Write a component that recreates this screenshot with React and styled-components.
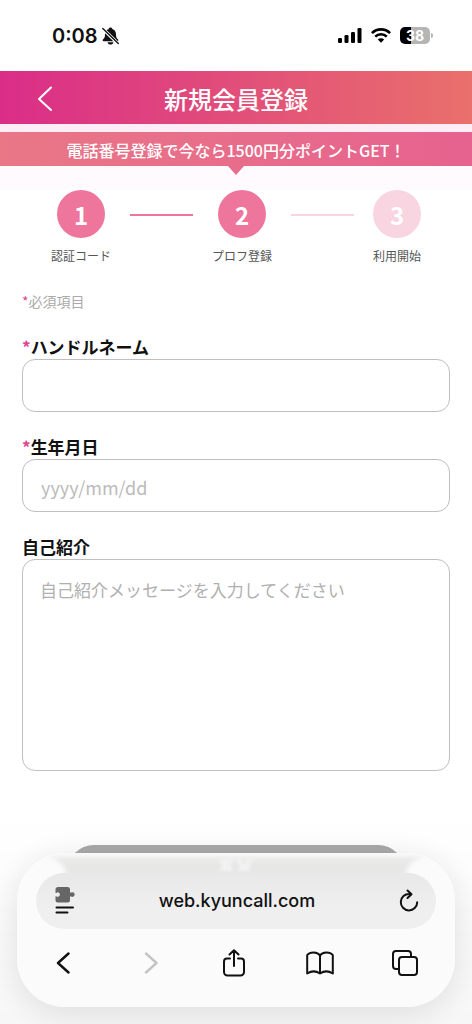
import React from "react"
import styled, { createGlobalStyle } from "styled-components"

const GlobalStyle = createGlobalStyle`
  * {
    box-sizing: border-box;
  }
  body {
    margin: 0;
    background: #fff;
    color: #111;
    font-family: "Noto Sans CJK JP", "Noto Sans", sans-serif;
  }
  button {
    padding: 0;
    border: 0;
    background: none;
    font: inherit;
    color: inherit;
  }
`

const Page = styled.div`
  display: flex;
  flex-direction: column;
  min-height: 100vh;
`

const StatusBar = styled.div`
  display: flex;
  align-items: center;
  justify-content: space-between;
  height: 71px;
  padding: 0 39px 0 52px;
`

const StatusGroup = styled.div`
  display: flex;
  align-items: center;
  gap: ${p => p.$gap}px;
`

const Clock = styled.span`
  font-family: Inter, sans-serif;
  font-size: 20px;
  font-weight: 600;
  line-height: 24px;
`

const Battery = styled.div`
  display: flex;
  align-items: center;
  gap: 1px;
`

const BatteryBody = styled.div`
  width: 30px;
  height: 17px;
  border-radius: 5px;
  background: linear-gradient(90deg, #000 38%, #b5b5b5 38%);
  color: #fff;
  font-family: Inter, sans-serif;
  font-size: 14px;
  font-weight: 700;
  line-height: 17px;
  text-align: center;
`

const BatteryTip = styled.div`
  width: 2px;
  height: 5px;
  border-radius: 0 2px 2px 0;
  background: #b5b5b5;
`

const Top = styled.div`
  display: flex;
  flex-direction: column;
  gap: 8px;
  padding-bottom: 24px;
  background: linear-gradient(#fdedf6 60px, #fffafd 96px);
`

const Header = styled.header`
  display: grid;
  grid-template-columns: 60px 1fr 60px;
  align-items: center;
  height: 53px;
  padding: 0 15px;
  background: linear-gradient(90deg, #da2d88, #e9706b);
  color: #fff;
`

const Title = styled.h1`
  margin: 0;
  padding-top: 2px;
  font-size: 24px;
  font-weight: 500;
  line-height: 36px;
  text-align: center;
`

const HeaderBack = styled.button`
  display: grid;
  place-items: center;
  height: 48px;
`

const Banner = styled.p`
  position: relative;
  margin: 0;
  padding-top: 2px;
  height: 34px;
  background: linear-gradient(90deg, #e97786, #e6628f);
  color: #fff;
  font-size: 16px;
  font-weight: 500;
  line-height: 32px;
  text-align: center;

  &::after {
    content: "";
    position: absolute;
    top: 100%;
    left: 50%;
    margin-left: -8px;
    border: 8px solid transparent;
    border-top: 9px solid #e86c8b;
    border-bottom: 0;
  }
`

const Steps = styled.ol`
  display: flex;
  justify-content: center;
  gap: 19px;
  margin: 0;
  padding: 0;
  list-style: none;
`

const Step = styled.li`
  display: flex;
  flex-direction: column;
  align-items: center;
  gap: 8px;
  color: #555;
  font-size: 12px;
  line-height: 20px;
`

const StepNumber = styled.span`
  width: 48px;
  height: 48px;
  border-radius: 50%;
  background: ${p => (p.$done ? "#ee769d" : "#f9d4e1")};
  color: #fff;
  font-size: 24px;
  font-weight: 700;
  line-height: 50px;
  text-align: center;
`

const StepLine = styled.li`
  width: 63px;
  height: 2px;
  margin-top: 24px;
  background: ${p => (p.$done ? "#ee769d" : "#f9d4e1")};
`

const Form = styled.form`
  display: flex;
  flex-direction: column;
  gap: 22px;
  padding: 24px 22px 0;
`

const Required = styled.span`
  color: #e0458f;
`

const Note = styled.p`
  margin: 0;
  color: #aaa;
  font-size: 14px;
  line-height: 22px;
`

const Field = styled.div`
  display: flex;
  flex-direction: column;
`

const Label = styled.label`
  font-size: 17px;
  font-weight: 700;
  line-height: 25px;
`

const Input = styled.input`
  width: 100%;
  height: 53px;
  padding: 2px 18px 0;
  border: 1px solid #bfbfbf;
  border-radius: 13px;
  background: #fff;
  font: inherit;
  font-size: 18px;

  &::placeholder {
    color: #bbb;
  }
`

const TextArea = styled.textarea`
  display: block;
  width: 100%;
  height: 212px;
  padding: 17px;
  border: 1px solid #bfbfbf;
  border-radius: 13px;
  background: #fff;
  font: inherit;
  font-size: 17px;
  line-height: 25px;
  resize: none;

  &::placeholder {
    color: #b0b0b0;
  }
`

const Submit = styled.button`
  align-self: center;
  width: 79%;
  height: 54px;
  margin-top: 52px;
  border-radius: 27px;
  background: #aaa;
`

const Dock = styled.div`
  position: fixed;
  right: 0;
  bottom: 0;
  left: 0;
  padding: 41px 17px 17px;
  background: linear-gradient(rgba(0, 0, 0, 0), rgba(0, 0, 0, 0.03));
`

const Glass = styled.div`
  position: relative;
  overflow: hidden;
  padding: 20px 19px 24px;
  border-radius: 48px;
  background: #fbfbfb;
`

const Shadow = styled.div`
  border-radius: 48px;
  box-shadow: 0 6px 36px rgba(0, 0, 0, 0.12);
`

const Reflection = styled.svg`
  position: absolute;
  top: 0;
  left: 0;
  width: 100%;
  height: 64px;
`

const AddressBar = styled.div`
  position: relative;
  display: grid;
  grid-template-columns: 20px 1fr 20px;
  align-items: center;
  height: 56px;
  padding: 0 17px 0 19px;
  border-radius: 28px;
  background: linear-gradient(#e8e8e8, #efefef 60%);
`

const Address = styled.span`
  font-family: Inter, sans-serif;
  font-size: 18px;
  font-weight: 500;
  line-height: 24px;
  text-align: center;
`

const IconButton = styled.button`
  display: grid;
  place-items: center;
  height: 40px;
`

const Toolbar = styled.nav`
  display: flex;
  justify-content: space-between;
  margin: 14px 11px 0 7px;

  ${IconButton} {
    width: 40px;
  }
`

const Line = ({ w, h, width = 2, color = "#111", children }) => (
  <svg
    width={w}
    height={h}
    viewBox={`0 0 ${w} ${h}`}
    fill="none"
    stroke={color}
    strokeWidth={width}
    strokeLinecap="round"
    strokeLinejoin="round"
    aria-hidden="true"
  >
    {children}
  </svg>
)

const BellOff = () => (
  <svg width="17" height="18" viewBox="0 0 17 18" aria-hidden="true">
    <path
      d="M8.500.4c-1 0-1.700.7-1.800 1.500C4.300 2.700 3 4.700 3 7.200c0 3-.6 4-1.900 5.100-.9.800-.5 1.900.6 1.900h13.600c1.100 0 1.500-1.100.6-1.900C14.600 11.200 14 10.200 14 7.200c0-2.500-1.300-4.500-3.700-5.300C10.200 1.100 9.500.4 8.500.4z"
      fill="#111"
    />
    <path d="M5.500 15.200h6c-.3 1.500-1.500 2.300-3 2.300s-2.700-.8-3-2.300z" fill="#111" />
    <path d="M.5 1.500l15.500 15" stroke="#fff" strokeWidth="3.200" />
    <path d="M.8 1.500l15.500 15" stroke="#111" strokeWidth="1.400" strokeLinecap="round" />
  </svg>
)

const Signal = () => (
  <svg width="24" height="15" viewBox="0 0 24 15" aria-hidden="true">
    <rect x="0" y="10" width="4" height="5" rx="1.200" />
    <rect x="6.500" y="7" width="4" height="8" rx="1.200" />
    <rect x="13" y="4" width="4" height="11" rx="1.200" />
    <rect x="19.500" y="0" width="4" height="15" rx="1.200" />
  </svg>
)

const Wifi = () => (
  <svg width="20" height="15" viewBox="0 0 20 15" aria-hidden="true">
    <g fill="none" stroke="#000" strokeWidth="2.600">
      <path d="M.9 5.100a13 13 0 0 1 18.200 0" />
      <path d="M4.200 8.600a8.300 8.300 0 0 1 11.600 0" />
    </g>
    <path d="M10 14.700l-3.200-3.200a4.600 4.600 0 0 1 6.400 0z" />
  </svg>
)

const ReaderIcon = () => (
  <svg width="20" height="28" viewBox="0 0 20 28" aria-hidden="true">
    <path
      d="M3 0h9.500A2.500 2.500 0 0 1 15 2.500v3.100h1.200a2.300 2.300 0 1 1 0 4H15v3.400a2.500 2.500 0 0 1-2.500 2.500H3A2.500 2.500 0 0 1 .5 13V9.300h.8a2.200 2.200 0 1 0 0-3.400H.5V2.500A2.500 2.500 0 0 1 3 0z"
      fill="#666"
    />
    <path d="M1.500 20.500h16.500M1.500 25.500h11" stroke="#111" strokeWidth="2" strokeLinecap="round" />
  </svg>
)

const GlassReflection = () => (
  <Reflection viewBox="0 0 438 64" preserveAspectRatio="none" aria-hidden="true">
    <defs>
      <linearGradient id="fade" gradientUnits="userSpaceOnUse" x1="0" y1="0" x2="0" y2="40">
        <stop offset="0" stopColor="#f0f0f0" />
        <stop offset=".3" stopColor="#e6e6e5" />
        <stop offset="1" stopColor="#e8e8e8" />
      </linearGradient>
      <filter id="soft" x="-10%" y="-20%" width="120%" height="140%">
        <feGaussianBlur stdDeviation="2" />
      </filter>
      <filter id="ghost" x="-20%" y="-40%" width="140%" height="180%">
        <feGaussianBlur stdDeviation="1.600" />
      </filter>
    </defs>
    <path d="M28 3h382c-12 2-20 9-22 19v16H50V22C48 12 40 5 28 3z" fill="url(#fade)" filter="url(#soft)" />
    <path
      d="M201 6h15v4h-3l3 8h-14l3-5zM218 6h6l3 5 4-5h7l-6 7 1 5h-12l2-5z"
      fill="#f2f2f2"
      filter="url(#ghost)"
    />
  </Reflection>
)

const steps = [
  { label: "認証コード", done: true },
  { label: "プロフ登録", done: true },
  { label: "利用開始", done: false },
]

export default function App() {
  return (
    <Page>
      <GlobalStyle />
      <StatusBar>
        <StatusGroup $gap={4}>
          <Clock>0:08</Clock>
          <BellOff />
        </StatusGroup>
        <StatusGroup $gap={9}>
          <Signal />
          <Wifi />
          <Battery>
            <BatteryBody>38</BatteryBody>
            <BatteryTip />
          </Battery>
        </StatusGroup>
      </StatusBar>

      <Top>
        <Header>
          <HeaderBack type="button" aria-label="戻る">
            <Line w={14} h={26} color="#fff">
              <path d="M13 2.500L1 14 13 25" />
            </Line>
          </HeaderBack>
          <Title>新規会員登録</Title>
        </Header>
        <Banner>電話番号登録で今なら1500円分ポイントGET！</Banner>
      </Top>

      <Steps>
        {steps.map((step, i) => (
          <React.Fragment key={step.label}>
            {i > 0 && <StepLine $done={step.done} aria-hidden="true" />}
            <Step>
              <StepNumber $done={step.done}>{i + 1}</StepNumber>
              {step.label}
            </Step>
          </React.Fragment>
        ))}
      </Steps>

      <Form>
        <Note>
          <Required>*</Required>必須項目
        </Note>
        <Field>
          <Label htmlFor="handle">
            <Required>*</Required>ハンドルネーム
          </Label>
          <Input id="handle" type="text" />
        </Field>
        <Field>
          <Label htmlFor="birthday">
            <Required>*</Required>生年月日
          </Label>
          <Input id="birthday" type="text" placeholder="yyyy/mm/dd" />
        </Field>
        <Field>
          <Label htmlFor="intro">自己紹介</Label>
          <TextArea id="intro" placeholder="自己紹介メッセージを入力してください" />
        </Field>
        <Submit type="button" aria-label="登録" />
      </Form>

      <Dock>
        <Shadow>
          <Glass>
            <GlassReflection />
            <AddressBar>
              <IconButton type="button" aria-label="ページメニュー">
                <ReaderIcon />
              </IconButton>
              <Address>web.kyuncall.com</Address>
              <IconButton type="button" aria-label="再読み込み">
                <Line w={20} h={24}>
                  <path d="M10.500 5A8.200 8.200 0 1 0 18.200 13.200M8.500 1.500L12.500 5.200 8.500 9" />
                </Line>
              </IconButton>
            </AddressBar>
            <Toolbar>
              <IconButton type="button" aria-label="前のページ">
                <Line w={14} h={22} width={2.4}>
                  <path d="M12.500 1.500L2 11l10.500 9.500" />
                </Line>
              </IconButton>
              <IconButton type="button" aria-label="次のページ">
                <Line w={18} h={22} width={2.4} color="#c4c4c4">
                  <path d="M6 1.500L16.500 11 6 20.500" />
                </Line>
              </IconButton>
              <IconButton type="button" aria-label="共有">
                <Line w={24} h={28}>
                  <path d="M8 9.500H5A3 3 0 0 0 2 12.500v10.500a3.500 3.500 0 0 0 3.500 3.500h13a3.500 3.500 0 0 0 3.500-3.500V12.500a3 3 0 0 0-3-3h-3M12 17V1.500M7.500 5.500L12 1.200l4.500 4.300" />
                </Line>
              </IconButton>
              <IconButton type="button" aria-label="ブックマーク">
                <Line w={28} h={24}>
                  <path d="M14 4.500C11.500.5 4 .5 1.200 4v18.500c4-2.600 9-2.600 12.800 0 3.800-2.600 8.800-2.600 12.800 0V4C24 .5 16.500.5 14 4.500zM14 4.500v18" />
                </Line>
              </IconButton>
              <IconButton type="button" aria-label="タブ">
                <Line w={28} h={28}>
                  <rect x="8" y="8" width="18" height="18" rx="3" />
                  <path d="M8 20H5a3 3 0 0 1-3-3V5a3 3 0 0 1 3-3h12a3 3 0 0 1 3 3v3" />
                </Line>
              </IconButton>
            </Toolbar>
          </Glass>
        </Shadow>
      </Dock>
    </Page>
  )
}
